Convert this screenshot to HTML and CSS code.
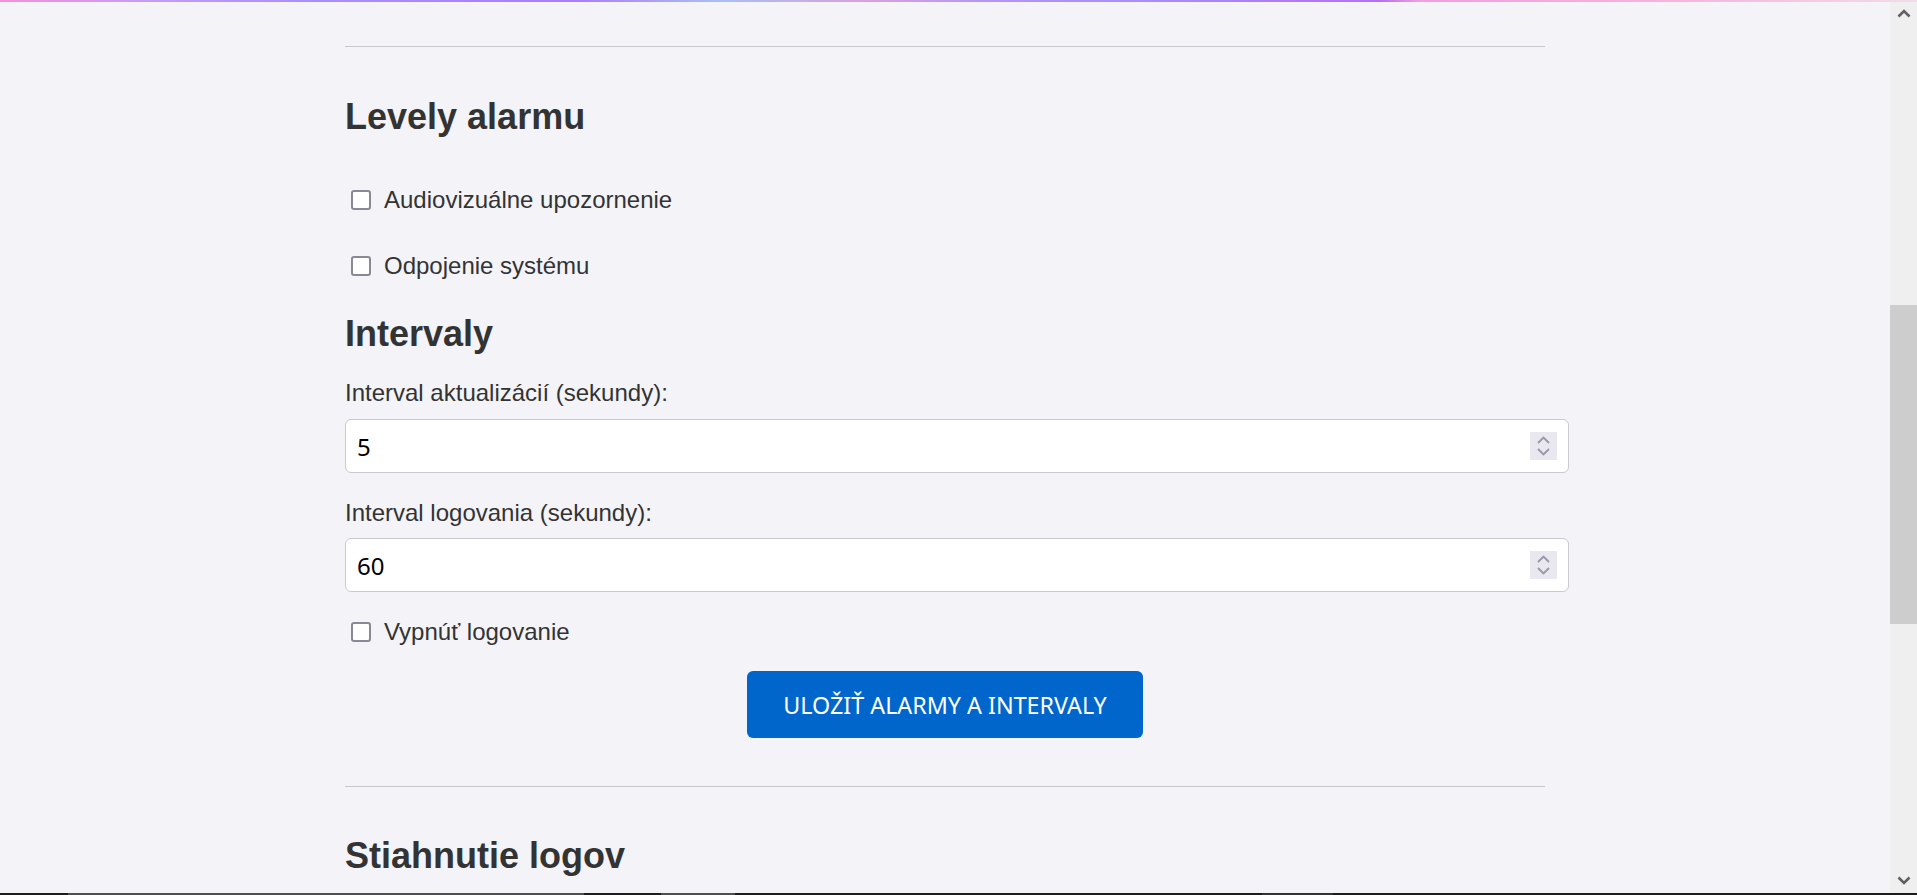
FILE: index.html
```html
<!DOCTYPE html>
<html lang="sk">
<head>
<meta charset="utf-8">
<title>Nastavenia alarmov</title>
<link rel="stylesheet" href="styles.css">
</head>
<body>
<div class="topline"></div>
<div class="window">
  <main class="viewport">
    <div class="container">
      <hr class="sep">
      <section class="panel">
        <h2 class="title title-first">Levely alarmu</h2>
        <label class="check check-first"><input type="checkbox"><span>Audiovizuálne upozornenie</span></label>
        <label class="check check-second"><input type="checkbox"><span>Odpojenie systému</span></label>

        <h2 class="title title-intervals">Intervaly</h2>
        <label class="field-label" for="upd">Interval aktualizácií (sekundy):</label>
        <div class="num-field">
          <input id="upd" type="number" value="5">
          <span class="spin"><svg width="27" height="28" viewBox="0 0 27 28"><path d="M8 11 L13.5 5.6 L19 11" fill="none" stroke="#9b98a9" stroke-width="2"/><path d="M8 17 L13.5 22.4 L19 17" fill="none" stroke="#9b98a9" stroke-width="2"/></svg></span>
        </div>

        <label class="field-label field-label-2" for="log">Interval logovania (sekundy):</label>
        <div class="num-field num-field-2">
          <input id="log" type="number" value="60">
          <span class="spin"><svg width="27" height="28" viewBox="0 0 27 28"><path d="M8 11 L13.5 5.6 L19 11" fill="none" stroke="#9b98a9" stroke-width="2"/><path d="M8 17 L13.5 22.4 L19 17" fill="none" stroke="#9b98a9" stroke-width="2"/></svg></span>
        </div>

        <label class="check check-third"><input type="checkbox"><span>Vypnúť logovanie</span></label>

        <div class="actions"><button class="btn" type="button">Uložiť alarmy a intervaly</button></div>
      </section>
      <hr class="sep sep-2">
      <section class="panel">
        <h2 class="title">Stiahnutie logov</h2>
      </section>
    </div>
  </main>
  <div class="scrollbar">
    <span class="sb-arrow"><svg width="14" height="9" viewBox="0 0 14 9"><path d="M1.5 7.5 L7 2 L12.5 7.5" fill="none" stroke="#606060" stroke-width="2.6"/></svg></span>
    <div class="sb-track">
      <div class="sb-thumb"></div>
    </div>
    <span class="sb-arrow"><svg width="14" height="9" viewBox="0 0 14 9"><path d="M1.5 1.5 L7 7 L12.5 1.5" fill="none" stroke="#606060" stroke-width="2.6"/></svg></span>
  </div>
</div>
<div class="taskbar"></div>
</body>
</html>
```

FILE: styles.css
```css
html, body {
  margin: 0;
  padding: 0;
}

body {
  background: #f3f3f8;
  color: #333;
  font-family: "Liberation Sans", Arial, sans-serif;
  overflow: hidden;
}

.topline {
  position: fixed;
  top: 0;
  left: 0;
  right: 0;
  height: 2px;
  z-index: 5;
  background: linear-gradient(90deg,
    #f78ed8 0%,
    #c89cf6 7%,
    #a98ffb 16%,
    #ab7cf7 30%,
    #a9bff0 37.5%,
    #d8a2de 45%,
    #b295f5 52%,
    #a98cf8 60%,
    #b470f1 72%,
    #f29ddf 74%,
    #f4b6de 88%,
    #f2dbe9 100%);
}

.window {
  display: flex;
  height: 893px;
}

.viewport {
  flex: 1;
  min-width: 0;
  overflow: hidden;
}

.container {
  max-width: 1200px;
  margin: 0 auto;
  padding-top: 46px;
}

.sep {
  margin: 0;
  height: 0;
  border: 0;
  border-top: 1px solid #c8c8cc;
}

.sep-2 {
  margin-top: 48px;
}

.title {
  margin: 48px 0 0;
  font-size: 36px;
  line-height: 42px;
  font-weight: 700;
  color: #333;
}

.title-first {
  margin-top: 49px;
}

.title-intervals {
  margin-top: 33px;
}

.check {
  display: flex;
  align-items: center;
  height: 28px;
  font-size: 24px;
  line-height: 28px;
  color: #333;
}

.check input {
  appearance: none;
  -webkit-appearance: none;
  box-sizing: border-box;
  width: 20px;
  height: 20px;
  margin: 0 13px 0 6px;
  border: 2.5px solid #8a8896;
  border-radius: 3px;
  background: #fff;
}

.check-first {
  margin-top: 48px;
}

.check-second {
  margin-top: 38px;
}

.check-third {
  margin-top: 26px;
}

.field-label {
  display: block;
  margin-top: 24px;
  font-size: 24px;
  line-height: 28px;
  color: #333;
}

.field-label-2 {
  margin-top: 26px;
}

.num-field {
  display: flex;
  align-items: center;
  box-sizing: border-box;
  width: calc(100% + 24px);
  height: 54px;
  margin-top: 12px;
  padding: 0 11px;
  background: #fff;
  border: 1px solid #cacacd;
  border-radius: 6px;
}

.num-field-2 {
  margin-top: 11px;
}

.num-field input {
  flex: 1;
  min-width: 0;
  padding: 0;
  border: 0;
  outline: 0;
  background: transparent;
  color: #000;
  font-family: "Noto Sans", "Open Sans", sans-serif;
  font-size: 24px;
  -moz-appearance: textfield;
}

.num-field input::-webkit-inner-spin-button,
.num-field input::-webkit-outer-spin-button {
  -webkit-appearance: none;
  margin: 0;
}

.spin {
  display: flex;
  width: 27px;
  height: 28px;
  background: #e9e8ef;
}

.actions {
  display: flex;
  justify-content: center;
  margin-top: 25px;
}

.btn {
  height: 67px;
  padding: 0 36px;
  border: 0;
  border-radius: 6px;
  background: #0066cc;
  color: #fff;
  font-family: "Noto Sans", "Open Sans", sans-serif;
  font-size: 23.3px;
  text-transform: uppercase;
  cursor: pointer;
}

.scrollbar {
  display: flex;
  flex-direction: column;
  width: 27px;
  background: #efefef;
}

.sb-arrow {
  display: flex;
  align-items: center;
  justify-content: center;
  height: 26px;
}

.sb-track {
  flex: 1;
  padding-top: 279px;
}

.sb-thumb {
  height: 319px;
  background: #cdcdcd;
}

.taskbar {
  height: 2px;
  background: linear-gradient(90deg,
    #1c1c1c 0 68px,
    #4e4e4e 68px 584px,
    #1c1c1c 584px 661px,
    #4e4e4e 661px 735px,
    #1c1c1c 735px 1262px,
    #333333 1262px 1333px,
    #1c1c1c 1333px);
}
```
